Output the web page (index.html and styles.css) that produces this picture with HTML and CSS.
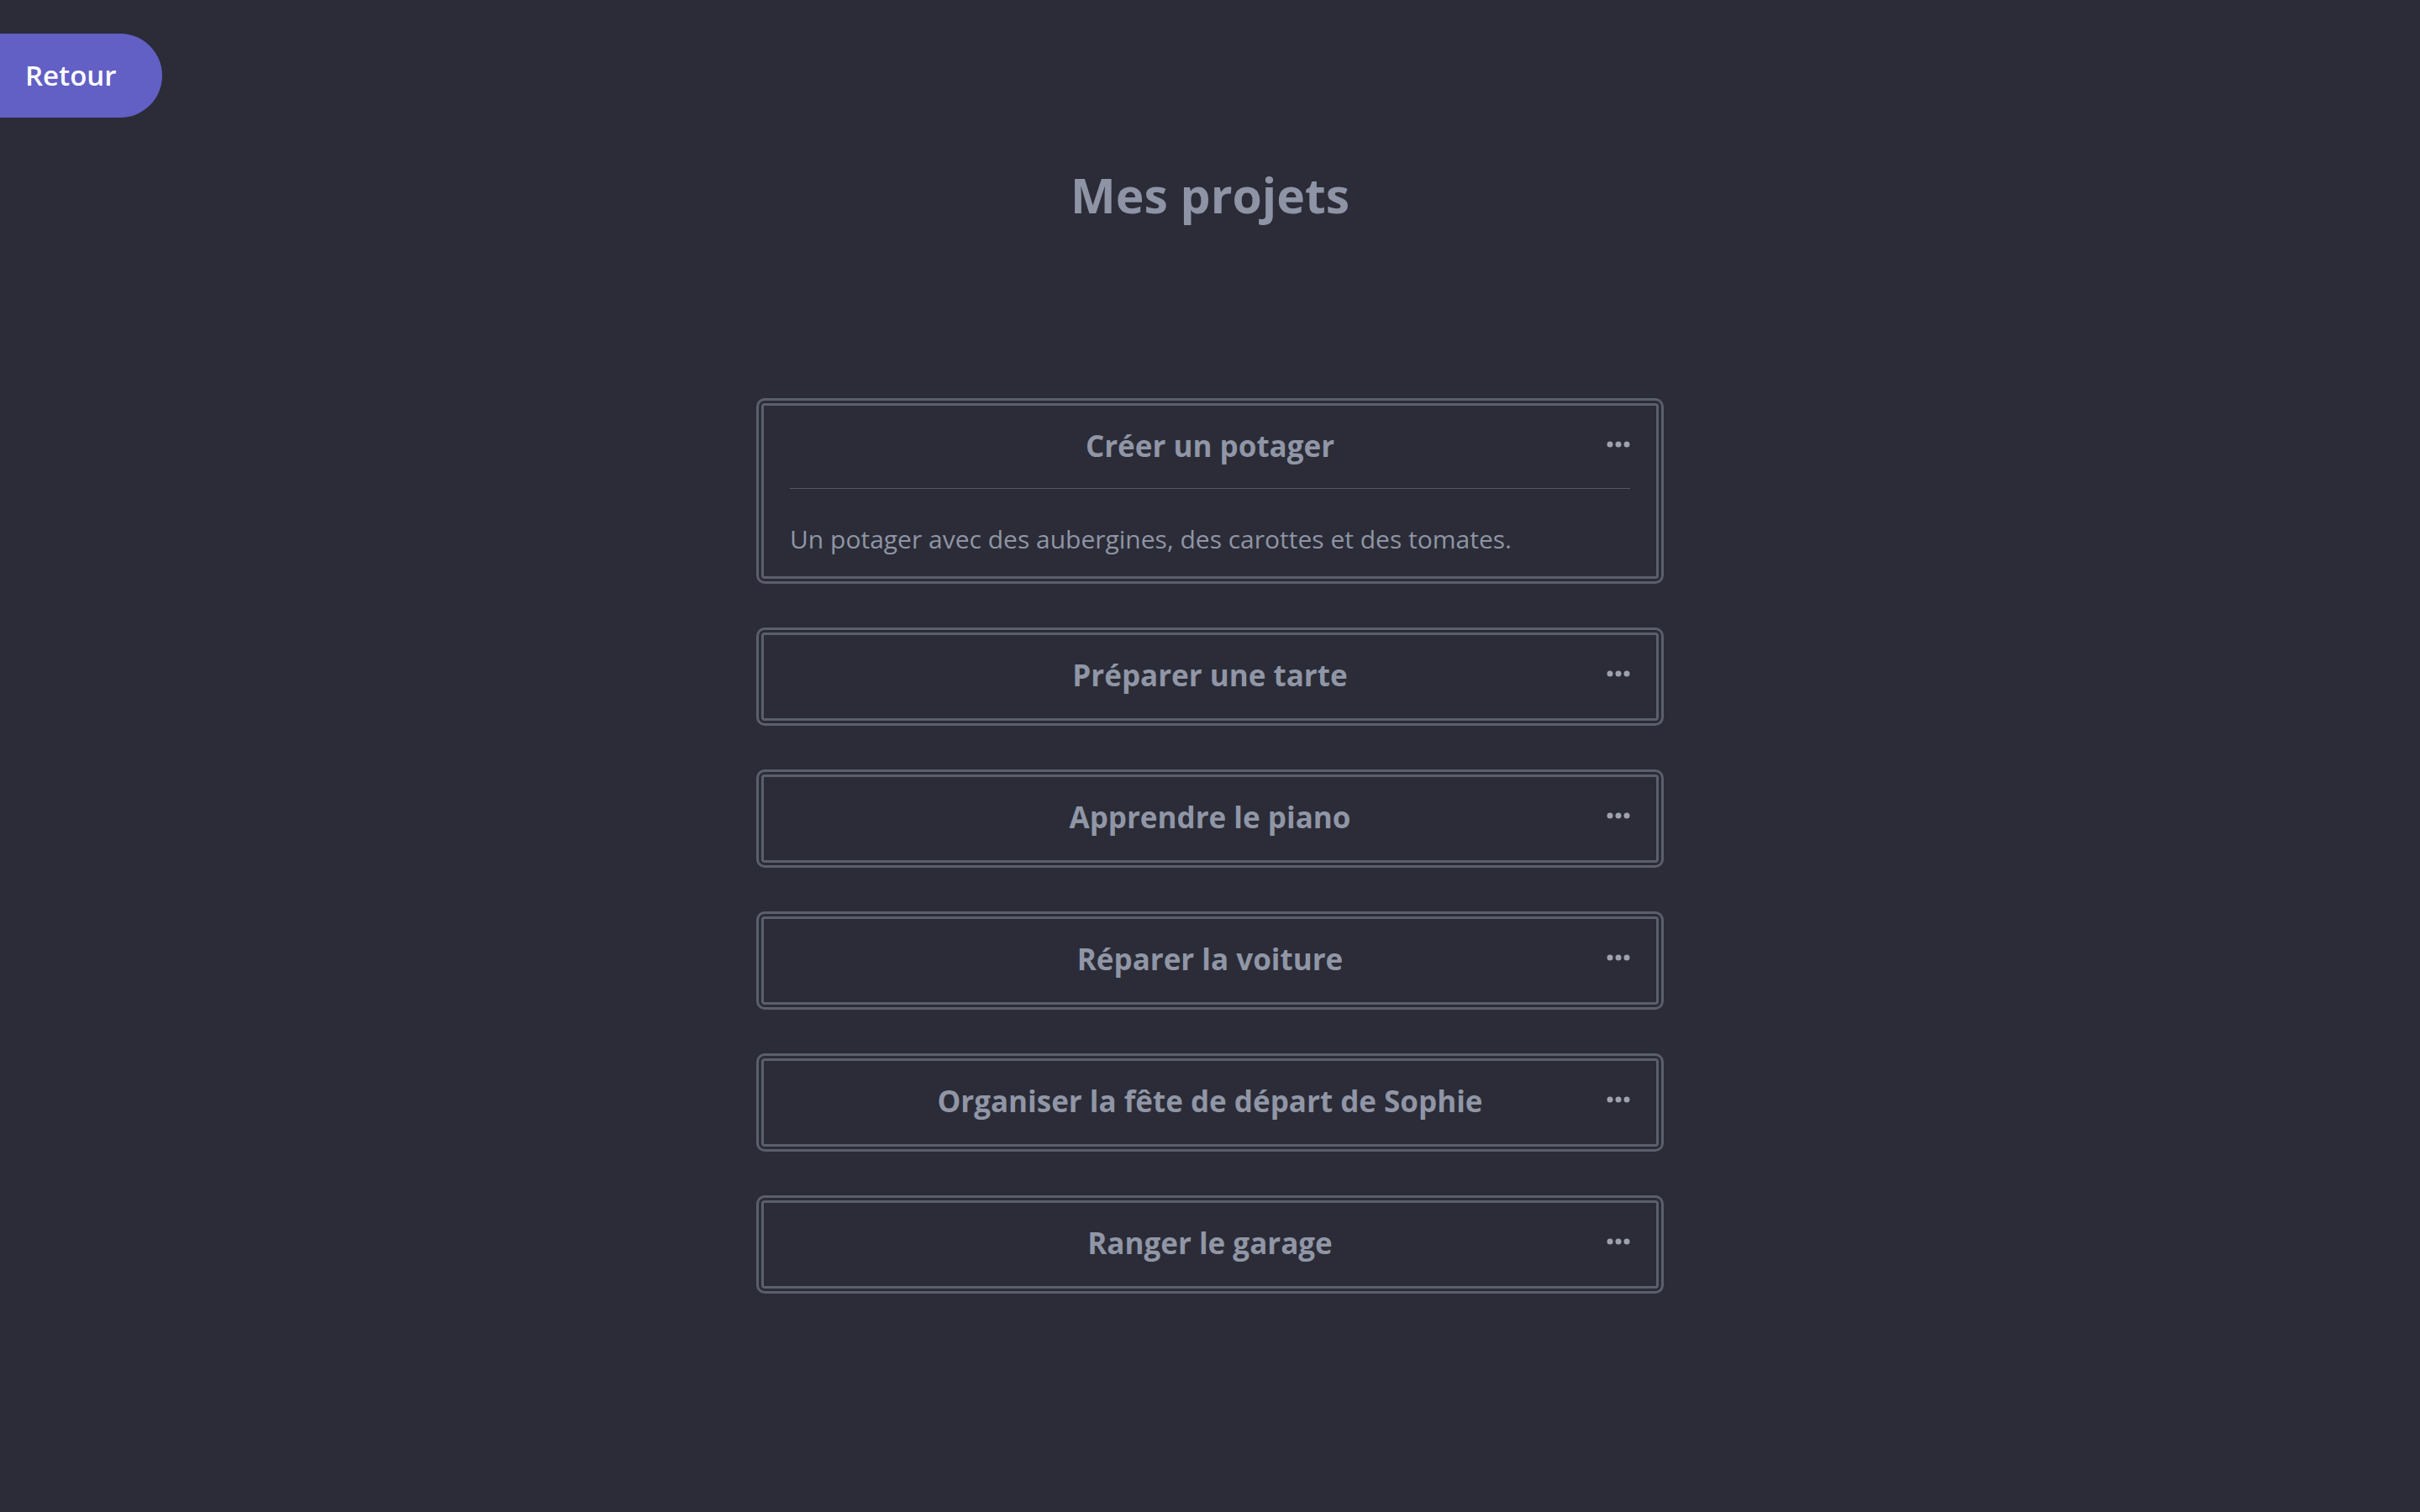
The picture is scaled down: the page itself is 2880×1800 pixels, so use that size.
FILE: index.html
```html
<!DOCTYPE html>
<html lang="fr">
<head>
<meta charset="utf-8">
<title>Mes projets</title>
<link rel="stylesheet" href="styles.css">
</head>
<body>
<header class="topbar">
  <button class="back-btn" type="button">Retour</button>
</header>
<main class="page">
  <h1 class="page-title">Mes projets</h1>
  <ul class="project-list">
    <li class="card">
      <div class="card-head">
        <h2 class="card-title">Créer un potager</h2>
        <span class="card-menu"><svg width="28" height="8" viewBox="0 0 28 8"><circle cx="4" cy="4" r="3.5"/><circle cx="14" cy="4" r="3.5"/><circle cx="24" cy="4" r="3.5"/></svg></span>
      </div>
      <p class="card-desc">Un potager avec des aubergines, des carottes et des tomates.</p>
    </li>
    <li class="card">
      <div class="card-head card-head-only">
        <h2 class="card-title">Préparer une tarte</h2>
        <span class="card-menu"><svg width="28" height="8" viewBox="0 0 28 8"><circle cx="4" cy="4" r="3.5"/><circle cx="14" cy="4" r="3.5"/><circle cx="24" cy="4" r="3.5"/></svg></span>
      </div>
    </li>
    <li class="card">
      <div class="card-head card-head-only">
        <h2 class="card-title">Apprendre le piano</h2>
        <span class="card-menu"><svg width="28" height="8" viewBox="0 0 28 8"><circle cx="4" cy="4" r="3.5"/><circle cx="14" cy="4" r="3.5"/><circle cx="24" cy="4" r="3.5"/></svg></span>
      </div>
    </li>
    <li class="card">
      <div class="card-head card-head-only">
        <h2 class="card-title">Réparer la voiture</h2>
        <span class="card-menu"><svg width="28" height="8" viewBox="0 0 28 8"><circle cx="4" cy="4" r="3.5"/><circle cx="14" cy="4" r="3.5"/><circle cx="24" cy="4" r="3.5"/></svg></span>
      </div>
    </li>
    <li class="card">
      <div class="card-head card-head-only">
        <h2 class="card-title">Organiser la fête de départ de Sophie</h2>
        <span class="card-menu"><svg width="28" height="8" viewBox="0 0 28 8"><circle cx="4" cy="4" r="3.5"/><circle cx="14" cy="4" r="3.5"/><circle cx="24" cy="4" r="3.5"/></svg></span>
      </div>
    </li>
    <li class="card">
      <div class="card-head card-head-only">
        <h2 class="card-title">Ranger le garage</h2>
        <span class="card-menu"><svg width="28" height="8" viewBox="0 0 28 8"><circle cx="4" cy="4" r="3.5"/><circle cx="14" cy="4" r="3.5"/><circle cx="24" cy="4" r="3.5"/></svg></span>
      </div>
    </li>
  </ul>
</main>
</body>
</html>
```

FILE: styles.css
```css
html, body {
  margin: 0;
  padding: 0;
}

body {
  background: #2b2c37;
  min-height: 1800px;
  font-family: "Open Sans", "Noto Sans", sans-serif;
  color: #8f95a5;
}

.topbar {
  padding-top: 40px;
  display: flex;
}

.back-btn {
  display: flex;
  align-items: center;
  box-sizing: border-box;
  width: 193px;
  height: 100px;
  padding: 0 0 2px 30px;
  border: none;
  border-radius: 0 50px 50px 0;
  background: #625fc5;
  color: #ffffff;
  font-family: "Open Sans", "Noto Sans", sans-serif;
  font-size: 33px;
  font-weight: 600;
  cursor: pointer;
}

.page {
  display: flex;
  flex-direction: column;
  align-items: center;
}

.page-title {
  margin: 52px 0 0;
  font-size: 57px;
  line-height: 80px;
  font-weight: 700;
  color: #8e94a5;
}

.project-list {
  list-style: none;
  margin: 202px 0 0;
  padding: 0;
  width: 1080px;
  display: flex;
  flex-direction: column;
  gap: 52px;
}

.card {
  border: 9px double #5b5f6c;
  border-radius: 10px;
  padding: 25px 31px 24px;
}

.card-head {
  position: relative;
  display: flex;
  justify-content: center;
  padding-bottom: 23px;
  border-bottom: 1px solid #545866;
}

.card-head-only {
  padding-bottom: 0;
  border-bottom: none;
}

.card-title {
  margin: -2px 0 2px;
  font-size: 35px;
  line-height: 50px;
  font-weight: 700;
  color: #9096a6;
}

.card-menu {
  position: absolute;
  right: 0;
  top: 17px;
  display: flex;
  fill: #9ea2ae;
}

.card-desc {
  margin: 39px 0 0;
  font-size: 30px;
  line-height: 41px;
  color: #8f95a5;
}
```
